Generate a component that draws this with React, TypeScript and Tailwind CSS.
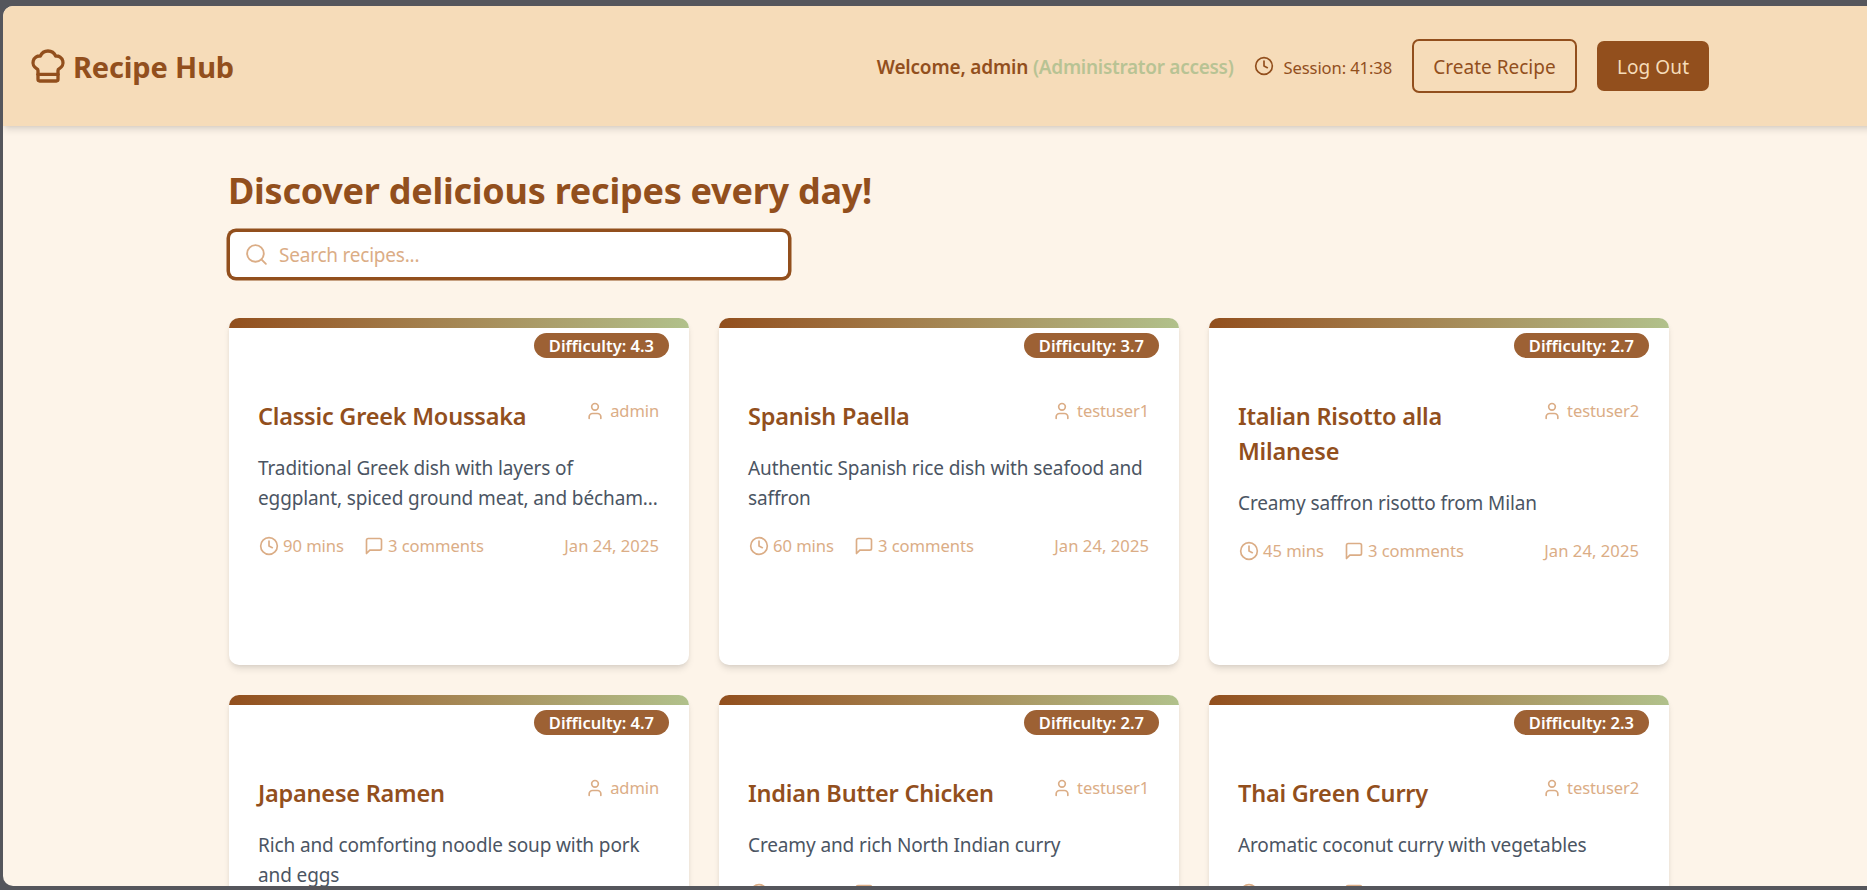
import { ChefHat, Clock, Search, User } from 'lucide-react';

type Recipe = {
  title: string;
  author: string;
  description: string;
  minutes: number;
  difficulty: string;
};

const recipes: Recipe[] = [
  {
    title: 'Classic Greek Moussaka',
    author: 'admin',
    description: 'Traditional Greek dish with layers of\neggplant, spiced ground meat, and bécham...',
    minutes: 90,
    difficulty: '4.3',
  },
  {
    title: 'Spanish Paella',
    author: 'testuser1',
    description: 'Authentic Spanish rice dish with seafood and saffron',
    minutes: 60,
    difficulty: '3.7',
  },
  {
    title: 'Italian Risotto alla Milanese',
    author: 'testuser2',
    description: 'Creamy saffron risotto from Milan',
    minutes: 45,
    difficulty: '2.7',
  },
  {
    title: 'Japanese Ramen',
    author: 'admin',
    description: 'Rich and comforting noodle soup with pork and eggs',
    minutes: 120,
    difficulty: '4.7',
  },
  {
    title: 'Indian Butter Chicken',
    author: 'testuser1',
    description: 'Creamy and rich North Indian curry',
    minutes: 50,
    difficulty: '2.7',
  },
  {
    title: 'Thai Green Curry',
    author: 'testuser2',
    description: 'Aromatic coconut curry with vegetables',
    minutes: 40,
    difficulty: '2.3',
  },
];

function CommentIcon() {
  return (
    <svg
      className="size-5"
      viewBox="0 0 24 24"
      fill="none"
      stroke="currentColor"
      strokeWidth={2}
      strokeLinecap="round"
      strokeLinejoin="round"
    >
      <path d="M21 15a2 2 0 0 1-2 2H7l-4 4V5a2 2 0 0 1 2-2h14a2 2 0 0 1 2 2z" />
    </svg>
  );
}

function RecipeCard({ recipe }: { recipe: Recipe }) {
  return (
    <article className="relative h-[347px] overflow-hidden rounded-[10px] bg-white shadow-[0_5px_7px_-1px_rgba(0,0,0,0.1),0_2px_5px_-2px_rgba(0,0,0,0.1)]">
      <div className="h-2.5 bg-linear-to-r from-[#924f1d] to-[#b1c18b]" />
      <span className="absolute top-[15px] right-5 flex h-[25px] items-center rounded-full bg-[#9d6134] px-[15px] pt-px text-[16.5px] leading-[24px] font-semibold text-white">
        Difficulty: {recipe.difficulty}
      </span>
      <div className="px-[30px] pt-[70px]">
        <div className="flex items-start justify-between">
          <h2 className="-ml-px max-w-[290px] pt-px text-[23.5px] leading-[35px] font-semibold tracking-[-0.22px] text-[#924f1d]">
            {recipe.title}
          </h2>
          <div className="flex items-center gap-[5px] text-[16.5px] leading-[25px] tracking-[-0.1px] text-[#dbad86]">
            <User className="size-5" />
            {recipe.author}
          </div>
        </div>
        <p className="mt-[19px] -mr-1 -ml-px text-[19px] leading-[30px] tracking-[-0.12px] whitespace-pre-line text-[#4b5563]">
          {recipe.description}
        </p>
        <div className="mt-5 flex items-center justify-between text-[16.6px] leading-[25px] tracking-[-0.05px] text-[#dbad86]">
          <div className="flex items-center gap-5">
            <span className="flex items-center gap-1">
              <Clock className="size-5" />
              {recipe.minutes} mins
            </span>
            <span className="flex items-center gap-1">
              <CommentIcon />3 comments
            </span>
          </div>
          <span className="tracking-[0.05px]">Jan 24, 2025</span>
        </div>
      </div>
    </article>
  );
}

export default function App() {
  return (
    <div className="h-[890px] overflow-hidden bg-[#55565c] pt-[6px] pb-[4px] pl-[3px] font-['Noto_Sans','Open_Sans',sans-serif]">
      <div className="h-full overflow-hidden rounded-l-[10px] bg-[#fdf4e9]">
        <header className="relative -mr-5 flex h-[120px] items-center justify-between bg-[#f6dcb9] pr-[178px] pl-[25px] text-[#924f1d] shadow-[0_5px_7px_-1px_rgba(0,0,0,0.1),0_2px_5px_-2px_rgba(0,0,0,0.1)]">
          <div className="flex items-center gap-[5px]">
            <ChefHat className="size-10" />
            <span className="pt-[2px] text-[29px] leading-10 font-bold tracking-[-0.15px]">Recipe Hub</span>
          </div>
          <nav className="flex items-center gap-5">
            <span className="pt-[2px] text-[19px] leading-[30px] font-semibold tracking-[-0.18px]">
              Welcome, admin <span className="tracking-[-0.28px] text-[#b8c394]">(Administrator access)</span>
            </span>
            <span className="flex items-center gap-2.5 text-[16.6px] leading-[25px] tracking-[-0.12px]">
              <Clock className="size-5" />
              <span className="pt-[2px]">Session: 41:38</span>
            </span>
            <button className="h-[54px] w-[165px] rounded-[7px] border-2 border-[#924f1d] pt-[2px] text-[19px]">
              Create Recipe
            </button>
            <button className="h-[50px] w-[112px] rounded-[7px] bg-[#924f1d] pt-[2px] text-[19px] tracking-[0.1px] text-[#f6dcb9]">
              Log Out
            </button>
          </nav>
        </header>
        <main className="ml-[226px] w-[1440px] pt-10">
          <h1 className="-ml-px text-[36px] leading-[50px] font-bold tracking-[-0.25px] text-[#924f1d]">
            Discover delicious recipes every day!
          </h1>
          <label className="mt-4 ml-px flex h-[45px] w-[558px] items-center rounded-[6px] bg-white pl-3.5 ring-[3.5px] ring-[#924f1d]">
            <Search className="size-[25px] text-[#dbad86]" strokeWidth={1.8} />
            <input
              placeholder="Search recipes..."
              className="ml-2.5 flex-1 bg-transparent pt-[2px] text-[19px] tracking-[-0.22px] outline-none placeholder:text-[#dbad86]"
            />
          </label>
          <div className="mt-[41px] grid grid-cols-3 gap-[30px]">
            {recipes.map((recipe) => (
              <RecipeCard key={recipe.title} recipe={recipe} />
            ))}
          </div>
        </main>
      </div>
    </div>
  );
}
